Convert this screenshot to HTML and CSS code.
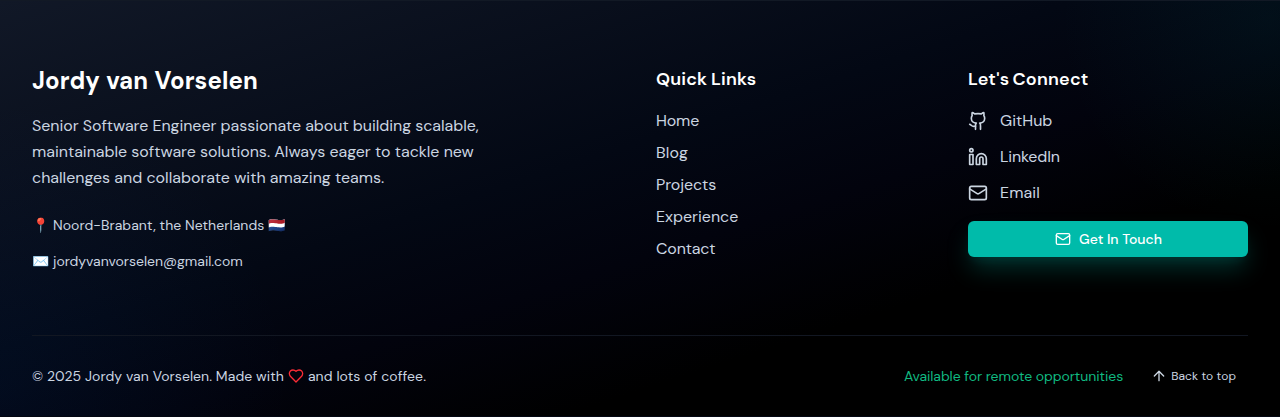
FILE: index.html
```html
<!DOCTYPE html>
<html lang="en">
<head>
<meta charset="utf-8">
<title>Jordy van Vorselen</title>
<link rel="stylesheet" href="styles.css">
</head>
<body>
<footer class="footer">
  <div class="footer-grid">
    <section class="about">
      <h3 class="name">Jordy van Vorselen</h3>
      <p class="bio"><span class="l1">Senior Software Engineer passionate about building scalable,</span><br><span class="l2">maintainable software solutions. Always eager to tackle new</span><br><span class="l3">challenges and collaborate with amazing teams.</span></p>
      <div class="facts">
        <p class="fact"><span class="emoji">📍</span><span class="place">Noord-Brabant, the Netherlands</span><span class="emoji flag">🇳🇱</span></p>
        <p class="fact"><span class="emoji">✉️</span><span class="mail">jordyvanvorselen@gmail.com</span></p>
      </div>
    </section>
    <nav class="column">
      <h4 class="heading quick">Quick Links</h4>
      <ul class="links">
        <li><a class="home">Home</a></li>
        <li><a class="blog">Blog</a></li>
        <li><a class="projects">Projects</a></li>
        <li><a class="experience">Experience</a></li>
        <li><a class="contact">Contact</a></li>
      </ul>
    </nav>
    <section class="column">
      <h4 class="heading connect">Let's Connect</h4>
      <div class="social">
        <a class="social-link"><svg class="icon" width="20" height="20" viewBox="0 0 24 24"><path d="M15 22v-4a4.8 4.8 0 0 0-1-3.5c3 0 6-2 6-5.5.08-1.25-.27-2.48-1-3.5.28-1.15.28-2.35 0-3.5 0 0-1 0-3 1.5-2.64-.5-5.36-.5-8 0C6 2 5 2 5 2c-.3 1.15-.3 2.35 0 3.5A5.403 5.403 0 0 0 4 9c0 3.5 3 5.5 6 5.5-.39.49-.68 1.05-.85 1.65-.17.6-.22 1.23-.15 1.85v4"/><path d="M9 18c-4.51 2-5-2-7-2"/></svg><span class="github">GitHub</span></a>
        <a class="social-link"><svg class="icon" width="20" height="20" viewBox="0 0 24 24"><path d="M16 8a6 6 0 0 1 6 6v7h-4v-7a2 2 0 0 0-4 0v7h-4v-7a6 6 0 0 1 6-6z"/><rect x="2" y="9" width="4" height="12"/><circle cx="4" cy="4" r="2"/></svg><span class="linkedin">LinkedIn</span></a>
        <a class="social-link"><svg class="icon" width="20" height="20" viewBox="0 0 24 24"><rect x="2" y="4" width="20" height="16" rx="2"/><path d="m22 7-8.97 5.7a1.94 1.94 0 0 1-2.06 0L2 7"/></svg><span class="email">Email</span></a>
      </div>
      <a class="cta"><svg class="icon" width="16" height="16" viewBox="0 0 24 24"><rect x="2" y="4" width="20" height="16" rx="2"/><path d="m22 7-8.97 5.7a1.94 1.94 0 0 1-2.06 0L2 7"/></svg><span>Get In Touch</span></a>
    </section>
  </div>
  <div class="bottom">
    <p class="copyright"><span class="copy-text">© 2025 Jordy van Vorselen. Made with</span><svg class="icon heart" width="16" height="16" viewBox="0 0 24 24"><path d="M19 14c1.49-1.46 3-3.21 3-5.5A5.5 5.5 0 0 0 16.5 3c-1.76 0-3 .5-4.5 2-1.5-1.5-2.74-2-4.5-2A5.5 5.5 0 0 0 2 8.5c0 2.3 1.5 4.05 3 5.5l7 7Z"/></svg><span class="coffee">and lots of coffee.</span></p>
    <div class="bottom-right">
      <span class="available">Available for remote opportunities</span>
      <a class="top-link"><svg class="icon" width="16" height="16" viewBox="0 0 24 24"><path d="m5 12 7-7 7 7"/><path d="M12 19V5"/></svg><span>Back to top</span></a>
    </div>
  </div>
</footer>
</body>
</html>
```
FILE: styles.css
```css
* { box-sizing: border-box; margin: 0; padding: 0; }
body {
  background: #030712;
  font-family: "DM Sans", Inter, "Noto Sans", sans-serif;
  font-size: 16px;
  line-height: 24px;
  color: #cbd5e1;
  overflow: hidden;
}
.footer {
  height: 416px;
  padding: 64px 32px 0;
  border-top: 1px solid #121925;
  background:
    radial-gradient(circle at 1270px 20px, rgba(0, 160, 160, .07), transparent 210px),
    radial-gradient(circle at 0px 390px, rgba(0, 85, 200, .07), transparent 290px),
    linear-gradient(to bottom right, #111827 0%, #030814 42%, #02030d 56%, #000 72%);
}
.footer-grid { display: grid; grid-template-columns: repeat(4, 1fr); gap: 32px; }
.about { grid-column: span 2; }
.name { font-size: 24px; line-height: 32px; font-weight: 700; color: #fff; margin-bottom: 16px; letter-spacing: .06px; word-spacing: .7px; }
.bio { line-height: 26px; margin-bottom: 24px; white-space: nowrap; }
.l1 { letter-spacing: -.045px; }
.l2 { letter-spacing: -.02px; }
.l3 { letter-spacing: -.01px; }
.facts { display: flex; flex-direction: column; gap: 16px; }
.fact { display: flex; font-size: 14px; line-height: 20px; white-space: nowrap; }
.emoji { width: 21px; font-family: "Noto Color Emoji", sans-serif; }
.place { letter-spacing: .06px; }
.mail { letter-spacing: -.02px; }
.flag { margin-left: 4px; }
.heading { font-size: 18px; line-height: 28px; font-weight: 600; color: #fff; margin-bottom: 16px; }
.quick { letter-spacing: .15px; word-spacing: -.7px; }
.connect { letter-spacing: .2px; word-spacing: -1.4px; }
.links { list-style: none; display: flex; flex-direction: column; gap: 8px; }
.home, .contact, .linkedin { letter-spacing: -.15px; }
.blog { letter-spacing: .2px; }
.projects { letter-spacing: -.06px; }
.email { letter-spacing: .1px; }
.social { display: flex; flex-direction: column; gap: 12px; margin-bottom: 16px; }
.social-link { display: flex; align-items: center; gap: 12px; }
.icon { fill: none; stroke: currentColor; stroke-width: 2; stroke-linecap: round; stroke-linejoin: round; flex: none; }
.cta {
  display: flex; align-items: center; justify-content: center; gap: 8px;
  height: 36px; border-radius: 6px; background: #00bbaa; color: #fff;
  font-size: 14px; font-weight: 500;
  box-shadow: 0 14px 24px -3px rgba(0, 187, 170, .26), 0 6px 12px -4px rgba(0, 187, 170, .12);
}
.cta span { position: relative; left: .5px; }
.bottom {
  display: flex; justify-content: space-between; align-items: center;
  margin-top: 64px; padding-top: 24px; border-top: 1px solid #121722;
  font-size: 14px; line-height: 20px;
}
.copyright { display: flex; align-items: center; gap: 4px; white-space: nowrap; }
.copy-text { letter-spacing: .07px; }
.coffee { letter-spacing: .08px; }
.heart { color: #fb2c36; }
.bottom-right { display: flex; align-items: center; gap: 16px; }
.available { color: #10b981; white-space: nowrap; letter-spacing: -.05px; }
.top-link { display: flex; align-items: center; gap: 4px; height: 32px; padding: 0 12px; font-size: 12px; font-weight: 450; letter-spacing: .09px; white-space: nowrap; }
```
